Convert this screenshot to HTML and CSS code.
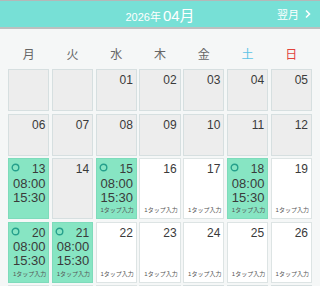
FILE: index.html
```html
<!DOCTYPE html>
<html lang="ja">
<head>
  <meta charset="UTF-8">
  <meta name="viewport" content="width=device-width, initial-scale=1.0">
  <title>勤務カレンダー</title>
  <link rel="stylesheet" href="styles.css">
</head>
<body>

<header class="month-bar">
  <div></div>
  <div class="month-title"><span class="year">2026年</span><span class="month">04月</span></div>
  <a class="next-month" href="#">翌月
    <svg width="8" height="10" viewBox="0 0 8 10"><polyline points="2,1.5 5.5,5 2,8.5" fill="none" stroke="#fff" stroke-width="1.6"/></svg>
  </a>
</header>

<div class="weekdays">
  <span>月</span><span>火</span><span>水</span><span>木</span><span>金</span><span class="sat">土</span><span class="sun">日</span>
</div>

<div class="calendar">
  <div class="week short">
    <div class="cell past"></div>
    <div class="cell past"></div>
    <div class="cell past"><div class="top"><span class="num">01</span></div></div>
    <div class="cell past"><div class="top"><span class="num">02</span></div></div>
    <div class="cell past"><div class="top"><span class="num">03</span></div></div>
    <div class="cell past"><div class="top"><span class="num">04</span></div></div>
    <div class="cell past"><div class="top"><span class="num">05</span></div></div>
  </div>
  <div class="week short">
    <div class="cell past"><div class="top"><span class="num">06</span></div></div>
    <div class="cell past"><div class="top"><span class="num">07</span></div></div>
    <div class="cell past"><div class="top"><span class="num">08</span></div></div>
    <div class="cell past"><div class="top"><span class="num">09</span></div></div>
    <div class="cell past"><div class="top"><span class="num">10</span></div></div>
    <div class="cell past"><div class="top"><span class="num">11</span></div></div>
    <div class="cell past"><div class="top"><span class="num">12</span></div></div>
  </div>
  <div class="week">
    <div class="cell shift">
      <div class="top"><svg class="mark" width="9" height="9" viewBox="0 0 9 9"><circle cx="4.5" cy="4.5" r="3.3" fill="none" stroke="#26a08c" stroke-width="1.4"/></svg><span class="num">13</span></div>
      <div class="times">08:00<br>15:30</div>
    </div>
    <div class="cell past"><div class="top"><span class="num">14</span></div></div>
    <div class="cell shift">
      <div class="top"><svg class="mark" width="9" height="9" viewBox="0 0 9 9"><circle cx="4.5" cy="4.5" r="3.3" fill="none" stroke="#26a08c" stroke-width="1.4"/></svg><span class="num">15</span></div>
      <div class="times">08:00<br>15:30</div>
      <div class="tap">1タップ入力</div>
    </div>
    <div class="cell"><div class="top"><span class="num">16</span></div><div class="tap">1タップ入力</div></div>
    <div class="cell"><div class="top"><span class="num">17</span></div><div class="tap">1タップ入力</div></div>
    <div class="cell shift">
      <div class="top"><svg class="mark" width="9" height="9" viewBox="0 0 9 9"><circle cx="4.5" cy="4.5" r="3.3" fill="none" stroke="#26a08c" stroke-width="1.4"/></svg><span class="num">18</span></div>
      <div class="times">08:00<br>15:30</div>
      <div class="tap">1タップ入力</div>
    </div>
    <div class="cell"><div class="top"><span class="num">19</span></div><div class="tap">1タップ入力</div></div>
  </div>
  <div class="week">
    <div class="cell shift">
      <div class="top"><svg class="mark" width="9" height="9" viewBox="0 0 9 9"><circle cx="4.5" cy="4.5" r="3.3" fill="none" stroke="#26a08c" stroke-width="1.4"/></svg><span class="num">20</span></div>
      <div class="times">08:00<br>15:30</div>
      <div class="tap">1タップ入力</div>
    </div>
    <div class="cell shift">
      <div class="top"><svg class="mark" width="9" height="9" viewBox="0 0 9 9"><circle cx="4.5" cy="4.5" r="3.3" fill="none" stroke="#26a08c" stroke-width="1.4"/></svg><span class="num">21</span></div>
      <div class="times">08:00<br>15:30</div>
      <div class="tap">1タップ入力</div>
    </div>
    <div class="cell"><div class="top"><span class="num">22</span></div><div class="tap">1タップ入力</div></div>
    <div class="cell"><div class="top"><span class="num">23</span></div><div class="tap">1タップ入力</div></div>
    <div class="cell"><div class="top"><span class="num">24</span></div><div class="tap">1タップ入力</div></div>
    <div class="cell"><div class="top"><span class="num">25</span></div><div class="tap">1タップ入力</div></div>
    <div class="cell"><div class="top"><span class="num">26</span></div><div class="tap">1タップ入力</div></div>
  </div>
  <div class="week">
    <div class="cell"></div>
    <div class="cell"></div>
    <div class="cell"></div>
    <div class="cell"></div>
    <div class="cell past"></div>
    <div class="cell past"></div>
    <div class="cell past"></div>
  </div>
</div>

</body>
</html>
```

FILE: styles.css
```css
html, body {
  overflow: hidden;
}
body {
  margin: 0;
  background-color: #f5f7f7;
  font-family: "Liberation Sans", "Noto Sans CJK JP", sans-serif;
  color: #333;
}

.month-bar {
  display: grid;
  grid-template-columns: 1fr auto 1fr;
  align-items: center;
  height: 26px;
  background-color: #77e0d6;
  border-top: 1px solid #b4b8b8;
  border-bottom: 2px solid #bcc0c0;
  color: #fff;
}
.month-title {
  display: flex;
  align-items: baseline;
  gap: 2px;
  padding-top: 1px;
}
.year {
  font-size: 11px;
}
.month {
  font-size: 15px;
}
.next-month {
  justify-self: end;
  display: flex;
  align-items: center;
  gap: 5px;
  padding-right: 8px;
  font-size: 11px;
  color: #fff;
  text-decoration: none;
}

.weekdays {
  display: grid;
  grid-template-columns: repeat(7, 1fr);
  gap: 2px;
  margin: 18px 8px 6px;
  height: 16px;
  line-height: 16px;
  font-size: 12px;
  text-align: center;
  color: #666;
}
.weekdays .sat {
  color: #5cc3e6;
}
.weekdays .sun {
  color: #e2433c;
}

.calendar {
  display: flex;
  flex-direction: column;
  gap: 2.4px;
  margin: 0 8px;
}
.week {
  display: grid;
  grid-template-columns: repeat(7, 1fr);
  gap: 2.4px;
  height: 61px;
}
.week.short {
  height: 42.3px;
}

.cell {
  display: flex;
  flex-direction: column;
  padding: 3px 3px 3px 4px;
  background-color: #fff;
  border: 1px solid #dde4e4;
  overflow: hidden;
}
.cell.past {
  background-color: #ededed;
  border-color: #d6dfe0;
}
.cell.shift {
  background-color: #87e5c3;
  border-color: #7edbbb;
}

.top {
  display: flex;
  align-items: flex-start;
  height: 14px;
}
.num {
  margin-left: auto;
  font-size: 12px;
  line-height: 14px;
  color: #3a3a3a;
}
.mark {
  margin: 1px 0 0 -2px;
}
.times {
  margin-top: 0.5px;
  font-size: 13px;
  line-height: 14px;
  text-align: center;
  color: #3a3a3a;
}
.tap {
  margin-top: auto;
  padding-bottom: 1px;
  font-size: 6px;
  line-height: 8px;
  text-align: center;
  color: #555;
  white-space: nowrap;
}
```
